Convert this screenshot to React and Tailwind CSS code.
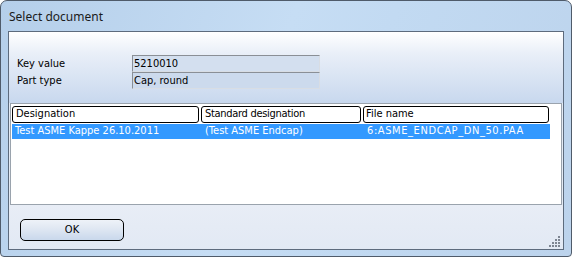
import React from "react";

const tahoma = { fontFamily: '"DejaVu Sans Condensed", "DejaVu Sans", sans-serif' };

function Grip() {
  const dots = [
    [10, 0],
    [7, 3], [10, 3],
    [4, 6], [7, 6], [10, 6],
    [1, 9], [4, 9], [7, 9], [10, 9],
  ];
  return (
    <svg width="13" height="12" viewBox="0 0 13 12" className="absolute right-[2px] bottom-[1px]">
      {dots.map(([x, y], i) => (
        <rect key={i} x={x} y={y} width="2" height="2" fill="#7d8592" />
      ))}
    </svg>
  );
}

export default function App() {
  return (
    <div className="w-[573px] h-[259px] bg-white" style={tahoma}>
      <div className="w-[572px] h-[257px] border border-[#4f5b6a] rounded-t-[7px] rounded-b-[4px] bg-[linear-gradient(110deg,#b5cfea_0%,#c6ddf4_45%,#c2daf2_60%,#bcd3ec_100%)] flex flex-col px-[7px] pb-[6px]">
        <div className="h-[30px] flex items-center pl-[1px] pt-[1px]">
          <span className="text-[12px] text-[#1b1b1b]" style={{ fontFamily: '"Noto Sans", "Open Sans", sans-serif' }}>
            Select document
          </span>
        </div>
        <div className="flex-1 border border-[#5d6b7d] flex flex-col relative bg-[#e4ebf5]">
          <div className="h-[71px] bg-[linear-gradient(180deg,#ffffff_0%,#e9eff8_30%,#c8d8ee_100%)] pt-[23px] pl-[8px] flex flex-col">
            <div className="flex items-center h-[17px]">
              <span className="w-[115px] text-[11px] text-black pt-[1px]">Key value</span>
              <div className="w-[188px] h-[17px] border border-t-[#8a8f96] border-l-[#8a8f96] border-r-[#d8dde4] border-b-[#d8dde4] bg-[#d3dfef] flex items-center px-[1px]">
                <span className="text-[11px] text-black leading-none">5210010</span>
              </div>
            </div>
            <div className="flex items-center h-[17px]">
              <span className="w-[115px] text-[11px] text-black pt-[1px]">Part type</span>
              <div className="w-[188px] h-[17px] border border-t-[#8a8f96] border-l-[#8a8f96] border-r-[#d8dde4] border-b-[#d8dde4] bg-[#ccdaed] flex items-center px-[1px]">
                <span className="text-[11px] text-black leading-none">Cap, round</span>
              </div>
            </div>
          </div>
          <div className="h-[102px] mx-[1px] border border-[#9aa3ad] bg-white pt-[2px] pl-[1px] flex flex-col">
            <div className="flex gap-[2px] h-[17px]">
              <div className="w-[187px] h-[17px] border border-black rounded-[3px] flex items-center pl-[3px] bg-white">
                <span className="text-[11px] text-black">Designation</span>
              </div>
              <div className="w-[160px] h-[17px] border border-black rounded-[3px] flex items-center pl-[3px] bg-white">
                <span className="text-[11px] text-black tracking-[-0.3px]">Standard designation</span>
              </div>
              <div className="w-[186px] h-[17px] border border-black rounded-[3px] flex items-center pl-[2px] bg-white">
                <span className="text-[11px] text-black">File name</span>
              </div>
            </div>
            <div className="mt-[1px] w-[538px] h-[15px] bg-[#3399ff] flex items-center text-white text-[11px]">
              <span className="w-[190px] pl-[3px]">Test ASME Kappe 26.10.2011</span>
              <span className="w-[162px] pl-[3px]">(Test ASME Endcap)</span>
              <span className="pl-[3px] tracking-[0.6px]">6:ASME_ENDCAP_DN_50.PAA</span>
            </div>
          </div>
          <div className="flex-1 bg-[linear-gradient(180deg,#e8edf6_0%,#e2e9f4_100%)] pt-[14px] pl-[11px]">
            <button className="w-[104px] h-[22px] border border-black rounded-[5px] bg-[linear-gradient(180deg,#eef2f8_0%,#dfe7f2_45%,#c9d8ec_100%)] flex items-center justify-center">
              <span className="text-[11px] text-black">OK</span>
            </button>
          </div>
          <Grip />
        </div>
      </div>
    </div>
  );
}
